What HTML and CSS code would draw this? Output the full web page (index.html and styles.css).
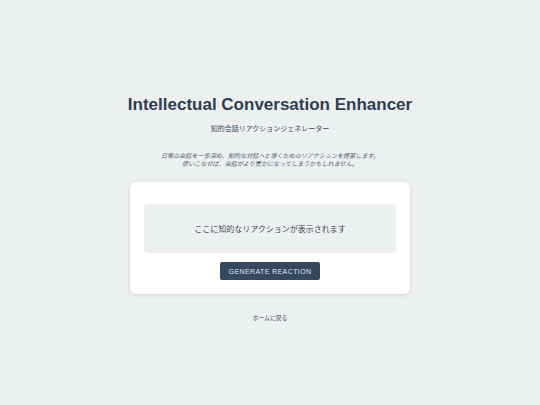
FILE: index.html
```html
<!DOCTYPE html>
<html lang="ja">
<head>
<meta charset="utf-8">
<link rel="stylesheet" href="styles.css">
</head>
<body>
<main class="page">
  <h1 class="title">Intellectual Conversation Enhancer</h1>
  <p class="subtitle">知的会話リアクションジェネレーター</p>
  <p class="desc">日常の会話を一歩深め、知的な対話へと導くためのリアクションを提案します。<br>使いこなせば、会話がより豊かになってしまうかもしれません。</p>
  <section class="card">
    <div class="reaction">ここに知的なリアクションが表示されます</div>
    <button class="btn">GENERATE REACTION</button>
  </section>
  <a class="home" href="#">ホームに戻る</a>
</main>
</body>
</html>
```
FILE: styles.css
```css
* { box-sizing: border-box; }
html, body { margin: 0; padding: 0; }
body {
  width: 540px;
  height: 405px;
  background: #ecf0f1;
  font-family: "Liberation Sans", Arial, "Noto Sans CJK JP", sans-serif;
  color: #2c3e50;
}
.page {
  display: flex;
  flex-direction: column;
  align-items: center;
  padding-top: 94px;
}
.title {
  margin: 0;
  font-size: 17px;
  font-weight: bold;
  line-height: 22px;
  color: #2c3e50;
}
.subtitle {
  margin: 7px 0 0;
  font-size: 7px;
  line-height: 12px;
  color: #34495e;
}
.desc {
  margin: 17px 0 0;
  font-size: 6.1px;
  line-height: 8px;
  font-style: italic;
  text-align: center;
  color: #555f6a;
}
.card {
  margin-top: 14px;
  width: 280px;
  height: 112px;
  background: #fff;
  border-radius: 6px;
  box-shadow: 0 1px 4px rgba(0,0,0,0.12);
  padding: 22px 14px 0;
  display: flex;
  flex-direction: column;
  align-items: center;
}
.reaction {
  width: 100%;
  height: 49px;
  flex-shrink: 0;
  background: #ecf0f1;
  border-radius: 4px;
  display: flex;
  align-items: center;
  justify-content: center;
  font-size: 8px;
  color: #3d4a57;
}
.btn {
  margin-top: 9px;
  width: 100px;
  height: 18px;
  flex-shrink: 0;
  border: none;
  border-radius: 2px;
  background: #34495e;
  color: #dfe5ea;
  font-family: "Liberation Sans", Arial, sans-serif;
  font-size: 7px;
  font-weight: normal;
  letter-spacing: 0.4px;
  padding: 0;
}
.home {
  margin-top: 19px;
  font-size: 5.8px;
  color: #34495e;
  text-decoration: none;
}
```
